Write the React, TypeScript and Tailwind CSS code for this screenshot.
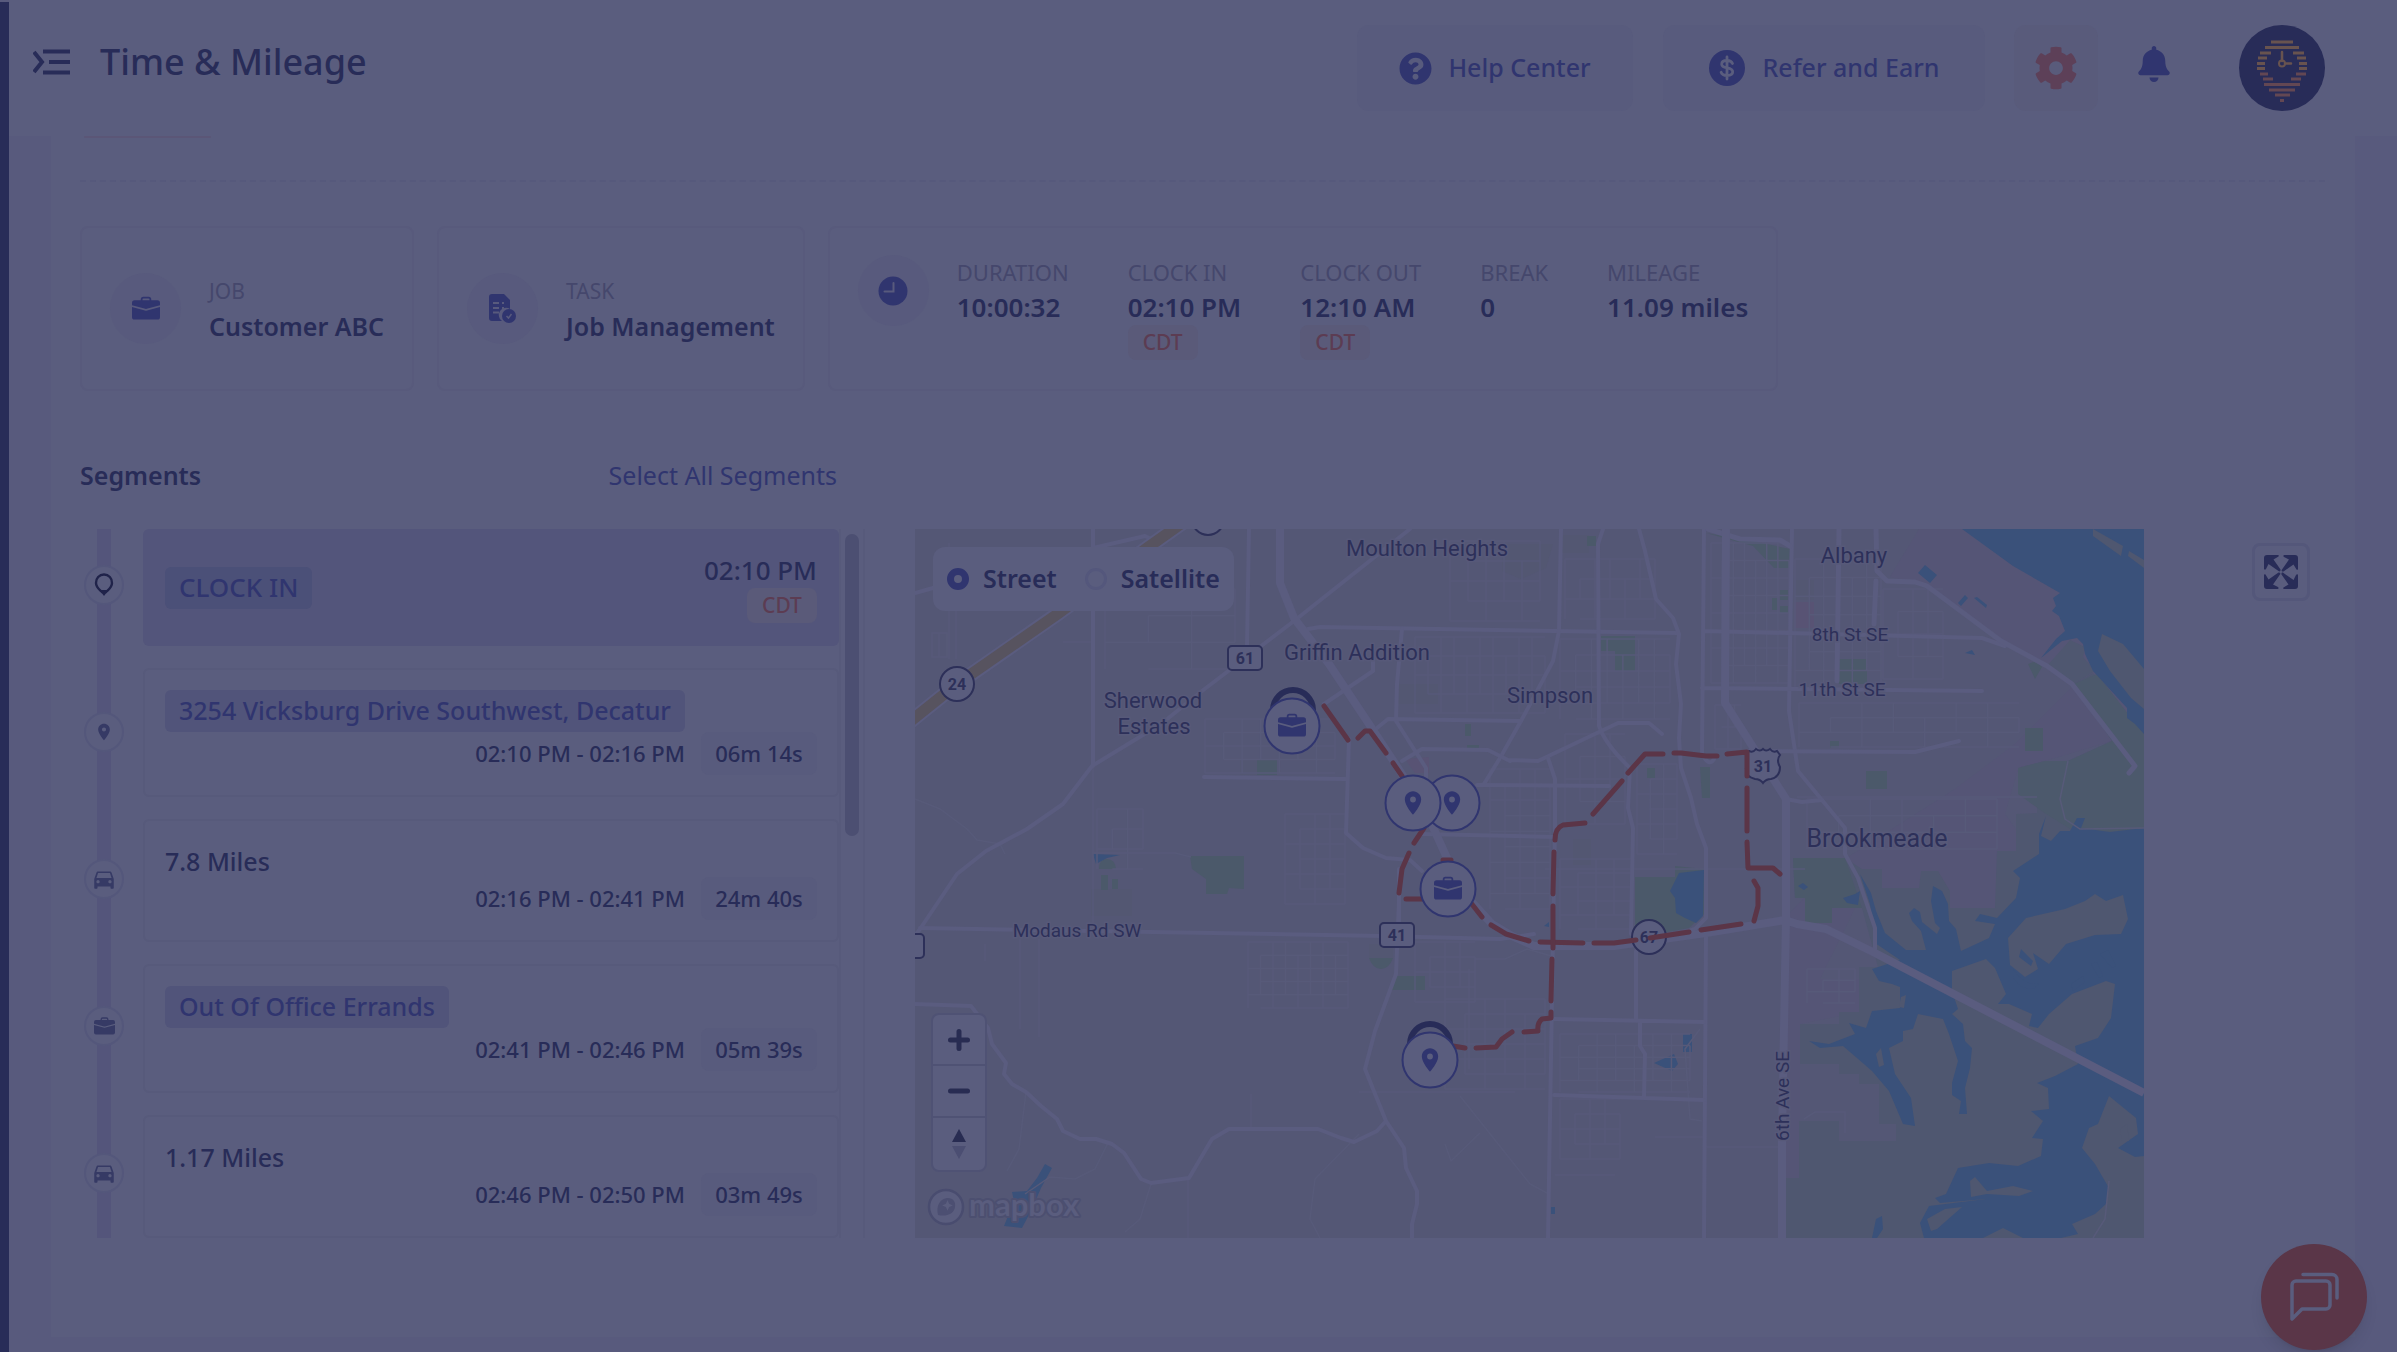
import { useState } from "react";
import type { ReactNode } from "react";
import { BsBriefcaseFill } from "react-icons/bs";
import { FaBell, FaCog, FaQuestionCircle } from "react-icons/fa";
import { MdDirectionsCar, MdLocationOn } from "react-icons/md";

type SegmentKind = "start" | "place" | "drive" | "job";

interface Segment {
  id: number;
  kind: SegmentKind;
  title: string;
  range: string;
  length?: string;
}

const SEGMENTS: Segment[] = [
  { id: 1, kind: "start", title: "CLOCK IN", range: "02:10 PM" },
  {
    id: 2,
    kind: "place",
    title: "3254 Vicksburg Drive Southwest, Decatur",
    range: "02:10 PM - 02:16 PM",
    length: "06m 14s",
  },
  {
    id: 3,
    kind: "drive",
    title: "7.8 Miles",
    range: "02:16 PM - 02:41 PM",
    length: "24m 40s",
  },
  {
    id: 4,
    kind: "job",
    title: "Out Of Office Errands",
    range: "02:41 PM - 02:46 PM",
    length: "05m 39s",
  },
  {
    id: 5,
    kind: "drive",
    title: "1.17 Miles",
    range: "02:46 PM - 02:50 PM",
    length: "03m 49s",
  },
];

const STATS = [
  { label: "DURATION", value: "10:00:32" },
  { label: "CLOCK IN", value: "02:10 PM", zone: "CDT" },
  { label: "CLOCK OUT", value: "12:10 AM", zone: "CDT" },
  { label: "BREAK", value: "0" },
  { label: "MILEAGE", value: "11.09 miles" },
];

function MenuIcon() {
  return (
    <svg viewBox="0 0 38 26" className="h-[26px] w-[38px]" fill="none">
      <path d="M1 3 9 13 1 23" stroke="currentColor" strokeWidth="4" />
      <path d="M10 2.500h27M16 13h21M10 23.500h27" stroke="currentColor" strokeWidth="4" />
    </svg>
  );
}

function DollarIcon() {
  return (
    <svg viewBox="0 0 36 36" className="size-9">
      <circle cx="18" cy="18" r="18" fill="#30356f" />
      <path
        d="M23.500 13.500c-.8-2-2.600-3-5.500-3-3.200 0-5.300 1.400-5.300 3.700 0 5.200 11 2.300 11 7.600 0 2.300-2.200 3.700-5.700 3.700-3.200 0-5.200-1.100-5.900-3.200M18 7v22"
        fill="none"
        stroke="#5a5d7e"
        strokeWidth="2.800"
        strokeLinecap="round"
      />
    </svg>
  );
}

function LogoIcon() {
  return (
    <svg viewBox="0 0 86 86" className="size-[86px]">
      <circle cx="43" cy="43" r="43" fill="#282c58" />
      <g stroke="#68534f" strokeWidth="3">
        <path d="M32 17h22M26 22.500h34M21 28h11M54 28h11M19 33h9M58 33h9M18 38.500h8M60 38.500h8M18 43.500h8M60 43.500h8" />
      </g>
      <g stroke="#634753" strokeWidth="3">
        <path d="M21 49h8M57 49h10M24 54h10M52 54h10M25 59.500h36M30 65h26M36 70h15M41 75.500h4" />
      </g>
      <path d="M43 27v9M46 38.500h6" stroke="#68534f" strokeWidth="2.500" strokeLinecap="round" />
      <circle cx="43" cy="38.500" r="3" fill="none" stroke="#68534f" strokeWidth="2" />
    </svg>
  );
}

function TaskIcon() {
  return (
    <svg viewBox="0 0 28 30" className="h-[30px] w-7">
      <path d="M3 0h12l6 6v9a7 7 0 0 0-8 12H3a3 3 0 0 1-3-3V3a3 3 0 0 1 3-3z" fill="#30356f" />
      <path d="M4 9h6M13 9h2M4 14h6M13 14h2M4 18.500h6" stroke="#585a7d" strokeWidth="2" />
      <circle cx="20" cy="22" r="7" fill="#30356f" />
      <path d="m17.500 22 2 2 3-4" fill="none" stroke="#585a7d" strokeWidth="1.500" />
    </svg>
  );
}

function ClockIcon() {
  return (
    <svg viewBox="0 0 30 30" className="size-[30px]">
      <circle cx="15" cy="15" r="14.500" fill="#30356f" />
      <path d="M15.500 7v8.500H6.500" fill="none" stroke="#585a7d" strokeWidth="2" strokeLinecap="round" />
    </svg>
  );
}

function BalloonIcon() {
  return (
    <svg viewBox="0 0 20 24" className="h-6 w-5">
      <path d="M10 1.500a8 8 0 0 1 8 8.500c0 4.500-3.500 6.500-6 9h-4c-2.500-2.500-6-4.500-6-9a8 8 0 0 1 8-8.500z" fill="none" stroke="#20234a" strokeWidth="2.400" />
      <path d="M5.500 17h9L10 23z" fill="#20234a" />
    </svg>
  );
}

function ExpandIcon() {
  return (
    <svg viewBox="0 0 34 34" className="size-[34px]" fill="currentColor">
      {["", "rotate(90 17 17)", "rotate(180 17 17)", "rotate(270 17 17)"].map((turn) => (
        <path
          key={turn}
          transform={turn}
          d="M0 3a3 3 0 0 1 3-3h11c1 0 1 1 .5 1.500L9.500 4.500l7 10c.5 1.500-1 2.500-2 1.500l-10-7L2 14c-.8 1-2 .8-2-.5z"
        />
      ))}
    </svg>
  );
}

function ChatIcon() {
  return (
    <svg viewBox="0 0 50 50" className="size-[50px]" fill="none" stroke="#5a5d7e" strokeWidth="3.500">
      <path d="M3 47V13a4 4 0 0 1 4-4h30a4 4 0 0 1 4 4v20a4 4 0 0 1-4 4H13z" strokeLinejoin="round" />
      <path d="M14 2.500h29a5 5 0 0 1 5 5V26" strokeLinecap="round" />
    </svg>
  );
}

const KIND_ICONS: Record<SegmentKind, ReactNode> = {
  start: <BalloonIcon />,
  place: <MdLocationOn className="size-5" />,
  drive: <MdDirectionsCar className="size-[26px]" />,
  job: <BsBriefcaseFill className="size-[21px]" />,
};

function ZoneBadge({ zone }: { zone: string }) {
  return (
    <span className="flex h-[35px] w-[70px] items-center justify-center rounded-lg bg-[#5a5a79] text-[21px] font-medium text-[#5c3c52]">
      {zone}
    </span>
  );
}

function Header() {
  return (
    <header className="flex h-[136px] items-start justify-between pt-[25px] pr-[72px] pl-6">
      <div className="flex items-center gap-[29px] pt-3.5">
        <button type="button" aria-label="Toggle menu">
          <MenuIcon />
        </button>
        <h1 className="text-[36px] leading-[46px] font-medium">Time &amp; Mileage</h1>
      </div>
      <div className="flex items-center text-[25px] font-medium text-[#30356f]">
        <button
          type="button"
          className="mr-[30px] flex h-[86px] w-[276px] items-center justify-center gap-4 rounded-xl bg-[#585b7d]"
        >
          <FaQuestionCircle className="size-[33px]" />
          Help Center
        </button>
        <button
          type="button"
          className="mr-[29px] flex h-[86px] w-[322px] items-center justify-center gap-[18px] rounded-xl bg-[#585b7d]"
        >
          <DollarIcon />
          Refer and Earn
        </button>
        <button
          type="button"
          aria-label="Settings"
          className="mr-[38px] flex h-[86px] w-[84px] items-center justify-center rounded-xl bg-[#595b7b] text-[#5d4058]"
        >
          <FaCog className="size-11" />
        </button>
        <button type="button" aria-label="Notifications" className="mr-[67px] pb-2">
          <FaBell className="size-9" />
        </button>
        <button type="button" aria-label="Account">
          <LogoIcon />
        </button>
      </div>
    </header>
  );
}

function IconDisc({ children }: { children: ReactNode }) {
  return (
    <span className="flex size-[71px] shrink-0 items-center justify-center rounded-full bg-[#585a7d] text-[#30356f]">
      {children}
    </span>
  );
}

function Summary() {
  const card = "flex h-[165px] rounded-lg border-2 border-[#585a7c] px-7 gap-7";
  return (
    <div className="flex gap-[23px]">
      <div className={`${card} items-center`}>
        <IconDisc>
          <BsBriefcaseFill className="size-7" />
        </IconDisc>
        <dl>
          <dt className="text-[21px] leading-[35px] text-[#45476c]">JOB</dt>
          <dd className="text-[25px] leading-[35px] font-semibold">Customer ABC</dd>
        </dl>
      </div>
      <div className={`${card} items-center`}>
        <IconDisc>
          <TaskIcon />
        </IconDisc>
        <dl>
          <dt className="text-[21px] leading-[35px] text-[#45476c]">TASK</dt>
          <dd className="text-[25px] leading-[35px] font-semibold">Job Management</dd>
        </dl>
      </div>
      <div className={`${card} items-start pt-[27px]`}>
        <IconDisc>
          <ClockIcon />
        </IconDisc>
        <dl className="flex gap-[59px]">
          {STATS.map((stat) => (
            <div key={stat.label}>
              <dt className="text-[22px] leading-[35px] text-[#45476c]">{stat.label}</dt>
              <dd className="text-[26px] leading-[35px] font-semibold">
                {stat.value}
                {stat.zone && <ZoneBadge zone={stat.zone} />}
              </dd>
            </div>
          ))}
        </dl>
      </div>
    </div>
  );
}

function SegmentCard({ segment }: { segment: Segment }) {
  if (segment.kind === "start") {
    return (
      <li className="flex h-[117px] items-center justify-between rounded-md bg-[#53557b] px-[22px]">
        <span className="flex h-[42px] items-center rounded-md bg-[#4b5078] px-3.5 text-[26px] font-medium text-[#30356f]">
          {segment.title}
        </span>
        <span className="flex flex-col items-end text-[26px] leading-[35px] font-medium">
          {segment.range}
          <ZoneBadge zone="CDT" />
        </span>
      </li>
    );
  }
  return (
    <li className="rounded-md border-2 border-[#575a7b] px-5 py-5">
      {segment.kind === "drive" ? (
        <p className="h-9 text-[25px] leading-10 font-medium">{segment.title}</p>
      ) : (
        <p className="flex">
          <span className="flex h-[42px] items-center rounded-md bg-[#51547a] px-3.5 text-[25px] font-medium whitespace-nowrap text-[#30356f]">
            {segment.title}
          </span>
        </p>
      )}
      <p className="flex items-center justify-end gap-4 text-[22px] font-medium">
        {segment.range}
        <span className="flex h-[43px] w-[116px] items-center justify-center rounded-lg bg-[#585b7d]">
          {segment.length}
        </span>
      </p>
    </li>
  );
}

function SegmentList() {
  return (
    <section>
      <div className="mb-[30px] flex h-[46px] items-center justify-between pr-7">
        <h2 className="text-[25px] font-semibold">Segments</h2>
        <button type="button" className="text-[25px] text-[#30356f]">
          Select All Segments
        </button>
      </div>
      <div className="flex">
        <div className="relative mr-[19px] ml-1 flex w-10 flex-col gap-[107px] pt-9">
          <div className="absolute inset-y-0 left-[13px] w-3.5 bg-[#54557b]" />
          {SEGMENTS.map((segment) => (
            <span
              key={segment.id}
              className="relative flex size-10 items-center justify-center rounded-full border-2 border-[#54577b] bg-[#5a5d7e] text-[#363a65]"
            >
              {KIND_ICONS[segment.kind]}
            </span>
          ))}
        </div>
        <ul className="flex flex-1 flex-col gap-[22px]">
          {SEGMENTS.map((segment) => (
            <SegmentCard key={segment.id} segment={segment} />
          ))}
        </ul>
        <div className="w-[26px] border-x-2 border-[#575a7b] px-1 pt-[5px]">
          <div className="h-[302px] rounded-full bg-[#4c4f72]" />
        </div>
      </div>
    </section>
  );
}

// x, y, width, height, columns, rows of the residential street blocks
const BLOCKS = [
  [500, 108, 130, 76, 10, 4],
  [650, 30, 90, 60, 6, 3],
  [796, 14, 78, 140, 7, 8],
  [880, 30, 86, 130, 6, 7],
  [968, 60, 60, 90, 4, 4],
  [884, 174, 220, 44, 7, 3],
  [892, 270, 190, 50, 6, 3],
  [800, 176, 26, 44, 4, 2],
  [645, 110, 110, 80, 7, 5],
  [650, 205, 60, 90, 4, 4],
  [722, 235, 40, 90, 3, 6],
  [575, 240, 60, 140, 4, 9],
  [535, 12, 90, 80, 5, 4],
  [290, 190, 130, 54, 7, 4],
  [182, 280, 46, 60, 3, 3],
  [370, 285, 60, 90, 4, 6],
  [333, 413, 100, 66, 8, 5],
  [500, 413, 60, 60, 4, 4],
  [530, 470, 100, 90, 5, 6],
  [645, 505, 130, 58, 7, 5],
  [645, 570, 60, 60, 4, 4],
  [892, 440, 48, 34, 3, 3],
  [190, 60, 130, 80, 3, 3],
  [645, 330, 72, 70, 4, 5],
];

function blockPath([x, y, w, h, cols, rows]: number[]) {
  let d = "";
  for (let c = 0; c <= cols; c++) {
    const top = c % 3 === 1 ? h / rows : 0;
    d += `M${x + (w * c) / cols} ${y + top}V${y + h - (c % 2 ? h / rows : 0)}`;
  }
  for (let r = 0; r <= rows; r++) {
    d += `M${x + (r % 2 ? w / cols : 0)} ${y + (h * r) / rows}H${x + w}`;
  }
  return d;
}

const PLACES = [
  { name: "Moulton Heights", x: 512, y: 27, size: 22 },
  { name: "Griffin Addition", x: 442, y: 131, size: 22 },
  { name: "Sherwood", x: 238, y: 179, size: 22 },
  { name: "Estates", x: 239, y: 205, size: 22 },
  { name: "Simpson", x: 635, y: 174, size: 22 },
  { name: "Albany", x: 939, y: 34, size: 22 },
  { name: "Brookmeade", x: 962, y: 318, size: 25 },
  { name: "8th St SE", x: 935, y: 112, size: 19 },
  { name: "11th St SE", x: 927, y: 167, size: 19 },
  { name: "Modaus Rd SW", x: 162, y: 408, size: 19 },
];

function JobMarker({ x, y }: { x: number; y: number }) {
  return (
    <g>
      <circle cx={x} cy={y} r="27.500" fill="#5a5d7e" stroke="#30356f" strokeWidth="2" />
      <BsBriefcaseFill x={x - 14} y={y - 14} size={28} color="#30356f" />
    </g>
  );
}

function PinMarker({ x, y }: { x: number; y: number }) {
  return (
    <g>
      <circle cx={x} cy={y} r="27.500" fill="#5a5d7e" stroke="#30356f" strokeWidth="2" />
      <MdLocationOn x={x - 14} y={y - 14} size={28} color="#30356f" />
    </g>
  );
}

function MapDrawing() {
  return (
    <svg
      viewBox="0 0 1229 709"
      preserveAspectRatio="xMidYMid slice"
      className="block h-full w-full bg-[#545775]"
      role="img"
      aria-label="Route map"
    >
      <path d="M1004 0H1229V205L1197 212 1103 240 1090 285 1122 330 1080 379H940L905 450H944V483L885 495V649L867 709V391L930 330 1040 260 1100 215 1160 155 1086 112 1012 57 975 48z" fill="#555576" />
      <g fill="#4f5770">
        <path d="M1159 155 1178 144 1229 205V709H870V649H884V592H924V612H981V595H964V555H944V545H924V535H885V495H924V483H944V438H963L947 379H917V394H890V369H880L878 329H930L947 340H967V359H1004L1006 342H1023L1035 362V379H1080L1082 322H1101V285L1122 284V267L1103 265V239L1130 232H1153L1197 212z" />
        <path d="M1132 137 1155 111 1170 118 1168 128 1180 142 1159 155z" />
      </g>
      <path d="M1153 232 1197 212 1159 155 1182 145 1229 205V299L1195 303 1155 300 1131 285 1103 265V239L1130 232z" fill="#4c596c" />
      <g fill="#535772">
        <path d="M587 15H638L631 39 606 50 587 42z" />
        <path d="M325 230h17v16h-17zM176 360h41v27h-41zM482 155h41v20h-41zM646 6h28v18h-28zM879 51h20v20h-20zM658 310h18v26h-18zM454 415h24v14h-24z" />
      </g>
      <path d="M879 73h20v26h-20zM490 230l10 14h14v-16z" fill="#585374" />
      <g fill="#4b596a">
        <path d="M686 107h34v35h-20v-20h-14zM791 4 838 12 875 20 874 39H859L838 17zM924 130h28v25h-28zM951 242h21v18h-21zM1110 199h18v23h-18zM785 238h10v31h-8zM672 7h9v10h-9z" />
        <path d="M720 348H760V337L789 340V385L774 399 720 409zM878 329H930L947 379H917V394H890V369H880z" />
        <path d="M275 327H329V360L314 359 312 365H291V350L277 340zM342 230h20v16h-20zM184 340q0-10 8-10t9 10zM479 447h31v14h-33zM454 429h24q-4 11-12 11t-12-11zM550 195h6v12h-6zM552 216h12v4h-12z" />
        <path d="M857 69h6v12h-6zM865 61h8v10h-8zM865 77h8v7h-8zM915 212h9v7h-9zM732 239h8v10h-8zM186 346h7v15h-7zM197 350h6v10h-6zM1113 135l8-3 6 6-7 12z" />
      </g>
      <g fill="#3a517a">
        <path d="M1047 0 1098 37 1145 64 1138 69 1141 77 1137 82 1144 87 1150 102 1141 110 1126 129 1147 112 1162 109 1168 115 1170 125 1178 142 1212 179V189L1220 195 1229 205V0z" />
        <path d="M1229 299 1195 303 1166 299 1170 289 1162 289 1155 302H1145L1136 312 1126 307 1131 287 1124 305V325L1098 342 1105 349 1101 369 1082 389 1065 385 1060 392 1080 395 1074 409 1046 422 1041 400 1034 392 1033 375 1027 362 1018 357 1016 372 1020 394 1025 399 1022 405 1007 393 1005 383 999 379 994 384 997 392 1006 402 1011 421H991L970 404 961 382 956 364 945 345 955 375 960 414 985 431 957 440 964 452 977 455 985 458 985 479 957 482 951 499 934 494 940 505 914 515 894 512 905 519 928 517 957 542 974 562 988 595 1000 597 996 569 980 545 974 519 988 512V502L998 500 1003 485 1028 490 1034 505 1043 532 1037 554V566L1046 572 1044 585H1052L1050 559 1055 539 1057 519 1050 512 1048 495 1037 485 1043 480 1037 462V442L1071 430 1080 439 1091 465 1083 475H1094L1117 485 1114 497 1123 499 1134 485 1157 465 1191 452 1200 455 1196 489 1183 509 1160 517 1163 535 1140 547 1122 554 1133 559 1134 580 1116 582 1128 592 1117 609 1128 610 1126 627 1103 637 1074 634 1043 639 1031 665 1020 669 1025 674 1071 670 1014 677 1005 694 1009 709H1068L1088 699 1108 709H1146L1163 705 1157 695 1180 685 1191 675 1194 659 1180 635 1167 619 1174 599 1183 595 1194 567 1221 589 1223 605 1203 619 1220 628 1229 627z" />
        <path d="M764 344 789 341 788 387 781 394 770 389 761 384 760 369 755 362zM130 635 137 639 126 659 116 682 107 699 89 697 99 672 97 663 112 662 122 649zM178 325 205 326 192 329 181 335zM768 505h9v18h-9zM739 534 759 525 763 535 757 542zM957 709 961 690 967 687 968 700 962 709z" />
        <path d="M1003 44 1010 36 1022 46 1015 54zM1043 74 1050 66 1053 69 1046 77zM1059 69 1062 68 1072 76 1071 79zM1050 124 1057 121 1060 126zM883 357 888 354 893 358 889 361zM928 369 940 365 945 362 943 376 932 374zM636 678h4v7h-4zM629 397l5-4v5z" />
      </g>
      <g fill="#4f5770">
        <path d="M1187 105 1208 115 1229 140V180L1216 169 1195 142 1183 122zM1178 0 1208 17 1206 27 1178 7zM1214 22 1229 31V39L1213 27z" />
        <path d="M1170 372 1180 365 1191 372 1208 366 1213 390 1206 405 1180 406 1151 415 1134 435 1118 424 1123 440 1110 448 1095 436 1093 409 1111 389 1150 380z" />
        <path d="M1055 652 1060 648 1072 662 1098 657 1118 662 1104 667 1072 665 1056 668zM1012 690 1030 680 1047 678 1022 700 1016 702zM986 468 991 466 989 479 984 478zM961 525 966 519 969 536 964 538zM1205 600 1212 595 1214 612 1207 612z" />
      </g>
      <path d="M1098 440q12 18 26 14l-4 5q-16 3-22-12zM1106 420l12 12-2 5-12-9zM1185 425l8-4 8 16-4 2zM1176 435l6-2 6 14-4 2zM1156 455l12-8 2 6-12 9z" fill="#3a517a" />

      <path d={BLOCKS.map(blockPath).join("")} fill="none" stroke="#575a79" strokeWidth="1.500" />
      <g fill="none" stroke="#575a79" strokeWidth="1.500">
        <path d="M0 270 25 280 52 300 62 311 85 315 90 325M178 237V400M105 410V500M124 410V508M177 324H260L276 328M70 415V432M336 565V598M444 563H600M545 567 615 655 632 664M444 605 400 650 395 690 405 709M565 604 536 632 530 615M194 612 180 640 160 650 135 648 110 665M236 655 225 690 210 703M273 650V709M111 563 104 620 92 642M630 340H890M882 268H1122M1153 232 1145 270 1150 290 1165 300 1229 299M1194 652 1190 690 1178 709" />
        <path d="M560 430H590L612 420 640 428M554 440V540M785 500 770 520 775 590 787 592M889 590 900 583H930V604M740 608H790M640 646H700M789 618H866M17 104H32V128H17zM24 104V128M34 14V130M41 82V130M148 113H176" />
      </g>

      <g fill="none" stroke="#5a5c7f" strokeWidth="4" strokeLinejoin="round" strokeLinecap="round">
        <path d="M178 0V237M178 19 230 7 240 12M0 64 18 59M495 0 379 92 287 162 246 195 177 237 148 275 112 300 71 322 42 345 5 400-4 412M334 0 332 117" />
        <path d="M393 100 405 98 762 104M789 102 1067 109 1090 117M787 159 1067 162M789 0 787 225Q795 240 800 228M877 0 874 182 883 242 930 299V325L943 349 960 399V424" />
        <path d="M646 0 644 102 638 132 606 192 585 229 569 255M688 0 683 15 684 197Q690 215 715 239L713 279 718 299 716 405M724 0 730 22 741 70 758 89 764 105 761 135 766 175 764 209 766 239 776 269 782 295 791 319V389L780 400 768 404M791 404 789 709" />
        <path d="M961 0 962 42 972 52 1000 53 1012 57 1086 112 1132 137 1157 155 1220 237 1214 244M961 52 959 95M924 0 922 152M793 0 825 10 865 11 875 17" strokeWidth="5" />
        <path d="M833 222 1000 223 1044 212M593 231 623 232 703 194 734 194 747 205M462 199 473 190 605 192M487 232 507 220 573 221 595 232M289 248 430 250M458 142 409 175M458 130V142M487 100 482 155 481 192 511 239V255M434 210 431 304 448 319 471 329 495 331 507 342M507 305 640 308M562 256 694 257" />
        <path d="M633 229 640 250V299L638 409 633 709M5 399 467 407 585 410 619 405M484 340V400M484 372 481 445 460 502 450 540 471 592 489 619 491 639 502 662V675L497 695V709M471 592 462 602 439 613 426 609 403 600H314L297 610 274 649 236 654 226 650 209 624 197 615 181 610H165L148 602 142 590 126 577 111 563 97 555 89 545 91 534 77 515 73 499 56 477 0 475" />
        <path d="M639 490 789 493M639 566 789 571M721 422V490M725 492V517L730 525 729 567M871 270 887 273 907 271" />
      </g>
      <g fill="none" stroke="#5a5c7f" strokeWidth="8" strokeLinejoin="round">
        <path d="M365 0V54L379 89 414 135 454 195 483 239 512 285 532 329 556 372 577 395 597 407 619 417H699L791 404 870 391 882 395 911 400 960 424 1229 564M811 0 810 174 871 270V389L867 609V709" />
      </g>
      <path d="M-8 195 42 155 144 84 232 19 270-8" fill="none" stroke="#5a5c7f" strokeWidth="15" />
      <path d="M-8 195 42 155 144 84 232 19 270-8" fill="none" stroke="#57535f" strokeWidth="11" />

      <g fill="#5a5d7e" stroke="#2d3059" strokeWidth="2">
        <rect x="313" y="117" width="34" height="24" rx="4" />
        <rect x="465" y="394" width="34" height="24" rx="4" />
        <rect x="-20" y="405" width="29" height="24" rx="4" />
        <circle cx="42" cy="155" r="17" />
        <circle cx="734" cy="408" r="17" />
        <circle cx="293" cy="-10" r="16" />
        <path d="M834 222q4 2 7-2 4 3 7 0 3 3 7 0 3 4 7 2l3 4q-4 5 0 12 0 10-9 12-5 0-8 4-3-4-8-4-10-2-9-12 4-7 0-12z" />
      </g>
      <g fontFamily="Roboto, sans-serif" fontSize="16" fontWeight="700" fill="#2d3059" textAnchor="middle">
        <text x="330" y="135">61</text>
        <text x="482" y="412">41</text>
        <text x="42" y="161">24</text>
        <text x="734" y="414">67</text>
        <text x="848" y="243">31</text>
      </g>

      <g fill="none" stroke="#5b3547" strokeWidth="5" strokeLinecap="round" strokeLinejoin="round">
        <path d="M409 177 433 211M443 209 450 202 455 202 471 224M478 234 487 247M509 299 499 314M494 324 487 340 484 364M491 370H510M528 331H536M556 374 567 388M576 396 591 405 614 412M625 413 668 414M679 414H699L721 411M735 409 774 403M786 401 826 395" />
        <path d="M839 392 843 377V359L839 352M865 345 858 339H833L832 313M832 302V259M832 247V223L812 225M802 227H791L766 224H759M748 225H730L713 244M707 252 678 285M670 294 648 296Q640 299 640 311M639 323 638 365M638 377V419M637 430 636 472M636 483V489L627 490Q622 494 623 502L609 503M597 503 587 510 581 518 561 519M550 519 538 517" />
      </g>

      <g
        fontFamily="Roboto, sans-serif"
        fill="#2d3059"
        textAnchor="middle"
        stroke="#575979"
        strokeWidth="3"
        paintOrder="stroke"
      >
        {PLACES.map((place) => (
          <text key={place.name} x={place.x} y={place.y} fontSize={place.size}>
            {place.name}
          </text>
        ))}
        <text transform="translate(874 567) rotate(-90)" fontSize="19">
          6th Ave SE
        </text>
      </g>

      <circle cx="378" cy="181" r="20" fill="none" stroke="#282c58" strokeWidth="6" />
      <circle cx="515" cy="515" r="20" fill="none" stroke="#282c58" strokeWidth="6" />
      <JobMarker x={377} y={197} />
      <PinMarker x={537} y={274} />
      <PinMarker x={498} y={274} />
      <JobMarker x={533} y={360} />
      <PinMarker x={515} y={531} />
    </svg>
  );
}

function MapboxMark() {
  return (
    <svg viewBox="0 0 160 38" className="h-[38px] w-40 overflow-visible" role="img" aria-label="mapbox">
      <circle cx="19" cy="19" r="17" fill="#5a5d7e" stroke="#494c6f" strokeWidth="2.500" />
      <path d="M11 27c-2-8 1-16 9-17 6-.5 9 4 8 9-1 7-9 10-17 8z" fill="#4c4f72" />
      <path d="m20.500 12 1.600 3.800 3.800 1.600-3.800 1.600-1.600 3.800-1.600-3.800-3.800-1.600 3.800-1.600z" fill="#5a5d7e" />
      <text
        x="42"
        y="28"
        fontFamily="Lato, sans-serif"
        fontSize="31"
        fontWeight="700"
        fill="#5a5d7e"
        stroke="#4c4f70"
        strokeWidth="4"
        strokeLinejoin="round"
        paintOrder="stroke"
      >
        mapbox
      </text>
    </svg>
  );
}

function RouteMap() {
  const [view, setView] = useState("Street");
  return (
    <section className="relative mt-[76px] h-[709px] overflow-hidden">
      <MapDrawing />
      <div className="absolute top-[18px] left-[18px] flex h-16 items-center gap-7 rounded-xl bg-[#5a5d7e] px-3.5 text-[25px] font-semibold">
        {["Street", "Satellite"].map((name) => (
          <label key={name} className="flex items-center gap-3.5">
            <input
              type="radio"
              name="map-view"
              checked={view === name}
              onChange={() => setView(name)}
              className="size-[22px] appearance-none rounded-full border-3 border-[#54577c] checked:border-7 checked:border-[#30356f]"
            />
            {name}
          </label>
        ))}
      </div>
      <div className="absolute bottom-[66px] left-4 flex w-14 flex-col divide-y-2 divide-[#4f5274] overflow-hidden rounded-lg border-2 border-[#4f5274] bg-[#5a5d7e]">
        <button type="button" aria-label="Zoom in" className="flex h-[51px] items-center justify-center">
          <svg viewBox="0 0 22 22" className="size-[22px]" stroke="#282c52" strokeWidth="5" strokeLinecap="round">
            <path d="M11 2.500v17M2.500 11h17" />
          </svg>
        </button>
        <button type="button" aria-label="Zoom out" className="flex h-[52px] items-center justify-center">
          <svg viewBox="0 0 22 22" className="size-[22px]" stroke="#282c52" strokeWidth="5" strokeLinecap="round">
            <path d="M2.500 11h17" />
          </svg>
        </button>
        <button type="button" aria-label="Reset north" className="flex h-[52px] items-center justify-center">
          <svg viewBox="0 0 14 30" className="h-[30px] w-3.5">
            <path d="M7 0 14 13H0z" fill="#282c52" />
            <path d="M7 30 14 17H0z" fill="#4b4e72" />
          </svg>
        </button>
      </div>
      <div className="absolute bottom-3 left-3">
        <MapboxMark />
      </div>
    </section>
  );
}

export default function App() {
  return (
    <div className="flex min-h-screen bg-[#585a7d] font-['Noto_Sans',sans-serif] text-[#282c58]">
      <div className="mt-0.5 w-[9px] shrink-0 bg-[#282c58]" />
      <div className="flex min-w-0 flex-1 flex-col">
        <div className="bg-[#5a5d7e]">
          <Header />
        </div>
        <main className="mr-[42px] mb-[15px] ml-[42px] flex-1 bg-[#5a5d7e] pr-[30px] pl-[29px]">
          <div className="ml-1 h-0.5 w-[127px] rounded-full bg-[#5b5677]" />
          <div className="mt-[42px] mb-11 border-t-2 border-dashed border-[#56597c]" />
          <Summary />
          <div className="mt-[62px] grid grid-cols-[785px_minmax(0,1fr)_auto]">
            <SegmentList />
            <div className="pl-[50px]">
              <RouteMap />
            </div>
            <button
              type="button"
              aria-label="Full screen"
              className="mt-[90px] mr-[15px] ml-[108px] flex size-[58px] items-center justify-center rounded-lg border-3 border-[#54577a]"
            >
              <ExpandIcon />
            </button>
          </div>
        </main>
      </div>
      <button
        type="button"
        aria-label="Open chat"
        className="fixed right-[30px] bottom-0.5 flex size-[106px] items-center justify-center rounded-full bg-[#5a3648] shadow-lg"
      >
        <ChatIcon />
      </button>
    </div>
  );
}
